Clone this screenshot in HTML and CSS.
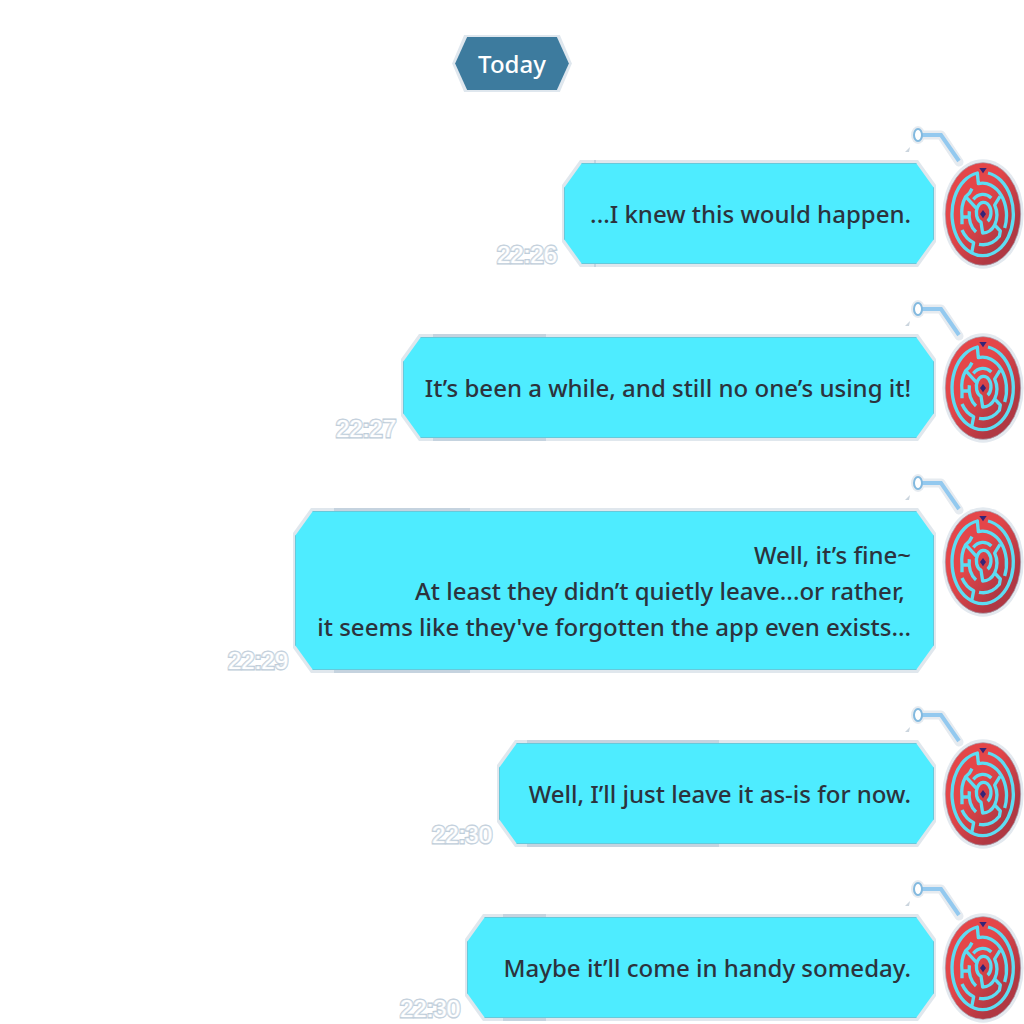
FILE: index.html
```html
<!DOCTYPE html>
<html lang="en">
<head>
<meta charset="utf-8">
<meta name="viewport" content="width=device-width, initial-scale=1">
<title>Chat</title>
<link rel="stylesheet" href="styles.css">
</head>
<body>
<svg class="defs" aria-hidden="true">
  <defs>
    <linearGradient id="red" x1="0" y1="0" x2="1" y2="1">
      <stop offset="0.4" stop-color="#e44649"/>
      <stop offset="0.75" stop-color="#b03843"/>
    </linearGradient>
    <symbol id="maze" viewBox="0 0 246 330">
      <ellipse cx="123" cy="165" rx="122" ry="164" fill="#e3e9ef"/>
      <ellipse cx="123" cy="165" rx="113" ry="154" fill="url(#red)" stroke="#a09bab" stroke-width="2"/>
      <g fill="none" stroke="#5ddcf2" stroke-width="10" stroke-linejoin="round">
        <path d="M138 42A92 125 0 1 1 106 42L109 74A72 97 0 0 1 188 207"/>
        <path d="M90 89L82 103L71 113A62 82 0 0 0 60 174H84M60 196V174M71 113L104 149"/>
        <path d="M94 121A44 60 0 0 1 148 117"/>
        <path d="M82 157A44 60 0 0 0 102 219"/>
        <path d="M174 112L158 138A44 58 0 0 1 158 198L175 216L172 232A68 80 0 0 1 111 256"/>
        <path d="M158 198A44 58 0 0 1 122 222L117 190A22 31 0 1 1 137 187"/>
        <path d="M60 213A66 88 0 0 0 95 251L89 282"/>
      </g>
      <path d="M112 27H134L123 43Z" fill="#352477"/>
      <path d="M123 153L132 165L123 178L114 165Z" fill="#352477"/>
    </symbol>
    <symbol id="link" viewBox="0 0 60 50">
      <path d="M13 12H36L54 39" fill="none" stroke="#e6ebf0" stroke-width="9" stroke-linejoin="round" stroke-linecap="round"/>
      <ellipse cx="13" cy="12" rx="7" ry="9" fill="#e6ebf0"/>
      <path d="M17 12H36L54 38" fill="none" stroke="#93c9ef" stroke-width="4"/>
      <ellipse cx="13" cy="12" rx="4" ry="6" fill="#fff" stroke="#82b9df" stroke-width="2"/>
      <path d="M0 29L5 24L4 29Z" fill="#cbd5de"/>
    </symbol>
  </defs>
</svg>
<main class="chat">
  <h1 class="day"><span>Today</span></h1>
  <ol class="messages">
    <li class="message">
      <time class="time">22:26</time>
      <div class="bubble size-xs"><p>...I knew this would happen.</p></div>
      <div class="avatar"><svg class="maze"><use href="#maze"/></svg><svg class="link"><use href="#link"/></svg></div>
    </li>
    <li class="message">
      <time class="time">22:27</time>
      <div class="bubble size-l"><p>It’s been a while, and still no one’s using it!</p></div>
      <div class="avatar"><svg class="maze"><use href="#maze"/></svg><svg class="link"><use href="#link"/></svg></div>
    </li>
    <li class="message">
      <time class="time">22:29</time>
      <div class="bubble size-xl"><p>Well, it’s fine~<br>At least they didn’t quietly leave...or rather,&nbsp;<br>it seems like they've forgotten the app even exists...</p></div>
      <div class="avatar"><svg class="maze"><use href="#maze"/></svg><svg class="link"><use href="#link"/></svg></div>
    </li>
    <li class="message">
      <time class="time">22:30</time>
      <div class="bubble size-s"><p>Well, I’ll just leave it as-is for now.</p></div>
      <div class="avatar"><svg class="maze"><use href="#maze"/></svg><svg class="link"><use href="#link"/></svg></div>
    </li>
    <li class="message">
      <time class="time">22:30</time>
      <div class="bubble size-m"><p>Maybe it’ll come in handy someday.</p></div>
      <div class="avatar"><svg class="maze"><use href="#maze"/></svg><svg class="link"><use href="#link"/></svg></div>
    </li>
  </ol>
</main>
</body>
</html>
```
FILE: styles.css
```css
* { box-sizing: border-box; }

body {
  margin: 0;
  background: #fff;
  color: #2c333d;
  font-family: "Noto Sans", "Open Sans", sans-serif;
  font-size: 24px;
  font-weight: 500;
  line-height: 36px;
}

.defs { position: absolute; width: 0; height: 0; }

.chat {
  display: flex;
  flex-direction: column;
  gap: 71px;
  padding: 36px 0 4px;
}

.day {
  align-self: center;
  position: relative;
  z-index: 0;
  margin: 0;
  padding: 10px 24px 9px;
  color: #fff;
  font-size: 24px;
  font-weight: 500;
}

.day::before,
.day::after {
  content: "";
  position: absolute;
  z-index: -1;
  clip-path: polygon(12px 0, calc(100% - 12px) 0, 100% 50%, calc(100% - 12px) 100%, 12px 100%, 0 50%);
}
.day::before { inset: -1px -2px; background: #dfe7ee; }
.day::after { inset: 1px; background: #3d7b9e; }

.messages {
  display: flex;
  flex-direction: column;
  gap: 71px;
  margin: 0;
  padding: 0;
  list-style: none;
}

.message {
  display: flex;
  justify-content: flex-end;
}

.time {
  align-self: flex-end;
  margin: 0 6px -4px 0;
  color: #fff;
  font-family: "Liberation Sans", sans-serif;
  font-size: 24px;
  font-weight: 400;
  line-height: 28px;
  -webkit-text-stroke: 3px #bccbd8;
  paint-order: stroke fill;
  text-shadow: 0 0 2px #d5dfe8, 1px 0 1px #e3e9ef, -1px 0 1px #e3e9ef;
}

.bubble {
  --cut: polygon(18px 0, calc(100% - 18px) 0, 100% 25px, 100% calc(100% - 25px), calc(100% - 18px) 100%, 18px 100%, 0 calc(100% - 25px), 0 25px);
  position: relative;
  z-index: 0;
  display: flex;
  flex-direction: column;
  justify-content: center;
  max-width: 100%;
  min-height: 103px;
  padding: 27px 24px 26px 0;
  text-align: right;
}

.bubble p { margin: 0; white-space: nowrap; }

.bubble::before,
.bubble::after {
  content: "";
  position: absolute;
  clip-path: var(--cut);
}
.bubble::before {
  inset: -2px -1px;
  z-index: -2;
  background: linear-gradient(#c5d3df, #c5d3df) var(--shade-start) 0 / var(--shade-width) 100% no-repeat #e0e7ed;
}
.bubble::after {
  inset: 1px;
  z-index: -1;
  background: #4eecff;
  box-shadow: inset 0 0 0 1px #66c9db;
}

.size-xs { width: 372px; --shade-start: 32px; --shade-width: 2px; }
.size-s { width: 437px; --shade-start: 30px; --shade-width: 192px; }
.size-m { width: 469px; --shade-start: 38px; --shade-width: 43px; }
.size-l { width: 533px; --shade-start: 32px; --shade-width: 113px; }
.size-xl { width: 641px; --shade-start: 41px; --shade-width: 136px; }

.avatar {
  position: relative;
  width: 82px;
  height: 110px;
  margin: -3px 0 -4px 7px;
}
.maze { display: block; width: 82px; height: 110px; }

/* Connector reaching over the top edge of the avatar */
.link {
  position: absolute;
  top: -36px;
  left: -37px;
  width: 60px;
  height: 50px;
}
```
